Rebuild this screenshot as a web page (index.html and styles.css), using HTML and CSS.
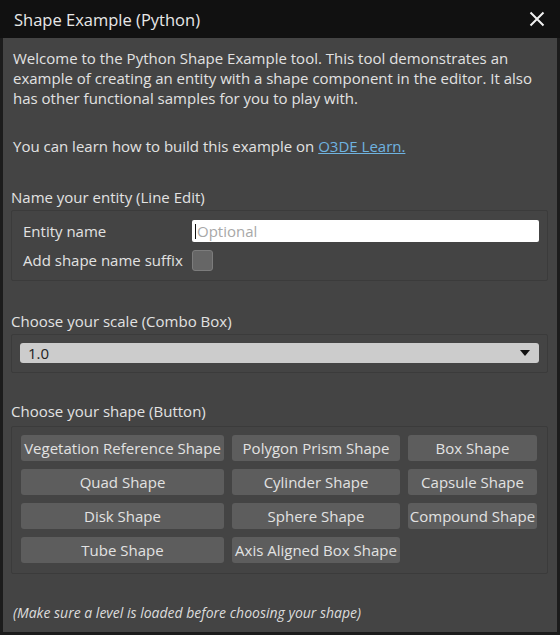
FILE: index.html
```html
<!DOCTYPE html>
<html>
<head>
<meta charset="utf-8">
<link rel="stylesheet" href="styles.css">
</head>
<body>
<div class="window">
  <div class="titlebar">
    <span class="title">Shape Example (Python)</span>
    <svg class="close" width="16" height="16" viewBox="0 0 16 16"><path d="M1.5 1.5 L14.5 14.5 M14.5 1.5 L1.5 14.5" stroke="#f0f0f0" stroke-width="2" fill="none"/></svg>
  </div>
  <div class="content">
    <p class="intro">Welcome to the Python Shape Example tool. This tool demonstrates an example of creating an entity with a shape component in the editor. It also has other functional samples for you to play with.</p>
    <p class="learn">You can learn how to build this example on <a class="link">O3DE Learn.</a></p>

    <div class="section name-section">
      <div class="label">Name your entity (Line Edit)</div>
      <div class="group form">
        <div class="row"><span class="flabel">Entity name</span><div class="input"><span class="caret"></span>Optional</div></div>
        <div class="row"><span class="flabel">Add shape name suffix</span><div class="check"></div></div>
      </div>
    </div>

    <div class="section scale-section">
      <div class="label">Choose your scale (Combo Box)</div>
      <div class="group combo-group">
        <div class="combo"><span>1.0</span><svg width="10" height="6" viewBox="0 0 10 6"><path d="M0 0 H10 L5 6 Z" fill="#111"/></svg></div>
      </div>
    </div>

    <div class="section shape-section">
      <div class="label">Choose your shape (Button)</div>
      <div class="group buttons">
        <div class="btn">Vegetation Reference Shape</div>
        <div class="btn">Polygon Prism Shape</div>
        <div class="btn">Box Shape</div>
        <div class="btn">Quad Shape</div>
        <div class="btn">Cylinder Shape</div>
        <div class="btn">Capsule Shape</div>
        <div class="btn">Disk Shape</div>
        <div class="btn">Sphere Shape</div>
        <div class="btn">Compound Shape</div>
        <div class="btn">Tube Shape</div>
        <div class="btn">Axis Aligned Box Shape</div>
      </div>
    </div>

    <p class="note">(Make sure a level is loaded before choosing your shape)</p>
  </div>
</div>
</body>
</html>
```
FILE: styles.css
```css
* { box-sizing: border-box; }
html, body { margin: 0; padding: 0; background: #1c1c1c; }
body { width: 560px; height: 635px; font-family: "Open Sans", "Noto Sans", sans-serif; color: #e2e2e2; }
.window {
  width: 560px; height: 635px;
  background: #444444;
  border-left: 3px solid #1c1c1c;
  border-right: 3px solid #1c1c1c;
  border-bottom: 3px solid #1c1c1c;
  display: flex; flex-direction: column;
}
.titlebar {
  height: 38px; background: #111111;
  display: flex; align-items: center; justify-content: space-between;
  margin: 0 -3px;
  padding: 0 15px 0 14px;
}
.title { font-size: 16.5px; color: #e8e8e8; }
.close { display: block; }
.content { padding: 0 9px 0 8px; display: flex; flex-direction: column; flex: 1; }
.intro { margin: 10px 0 0 2px; font-size: 15px; line-height: 20px; }
.learn { margin: 28px 0 0 2px; font-size: 15px; line-height: 20px; }
.link { color: #6fb3e0; text-decoration: underline; }
.section { display: flex; flex-direction: column; }
.label { font-size: 15px; line-height: 20px; }
.group { border: 1px solid #3b3b3b; border-radius: 2px; }
.name-section { margin-top: 31px; }
.name-section .group { margin-top: 3px; }
.form { padding: 9px 8px 9px 11px; display: flex; flex-direction: column; gap: 7px; }
.row { display: flex; align-items: center; height: 22px; }
.flabel { width: 169px; font-size: 15px; }
.input {
  flex: 1; height: 22px; background: #ffffff; border-radius: 2px;
  font-size: 15px; color: #a8a8a8; padding-left: 3px;
  display: flex; align-items: center;
}
.caret { width: 1px; height: 15px; background: #111; margin-right: 1px; }
.check { width: 21px; height: 21px; background: #666; border: 1px solid #7c7c7c; border-radius: 3px; }
.scale-section { margin-top: 30px; }
.scale-section .group { margin-top: 3px; }
.combo-group { padding: 8px 8px 9px 8px; }
.combo {
  height: 20px; background: #cccccc; border-radius: 3px;
  display: flex; align-items: center; justify-content: space-between;
  padding: 0 9px 0 8px; font-size: 15px; color: #222;
}
.shape-section { margin-top: 28px; }
.shape-section .group { margin-top: 5px; }
.buttons {
  display: grid; grid-template-columns: 203px 168px 129px;
  gap: 8px 8px; padding: 8px 10px 10px 9px;
  grid-auto-rows: 26px;
}
.btn {
  background: #5d5d5d; border-radius: 3px; color: #e2e2e2;
  font-size: 15px; display: flex; align-items: center; justify-content: center;
  white-space: nowrap;
}
.note { margin: 29px 0 0 2px; font-size: 14px; line-height: 20px; font-style: italic; color: #dcdcdc; }
```
